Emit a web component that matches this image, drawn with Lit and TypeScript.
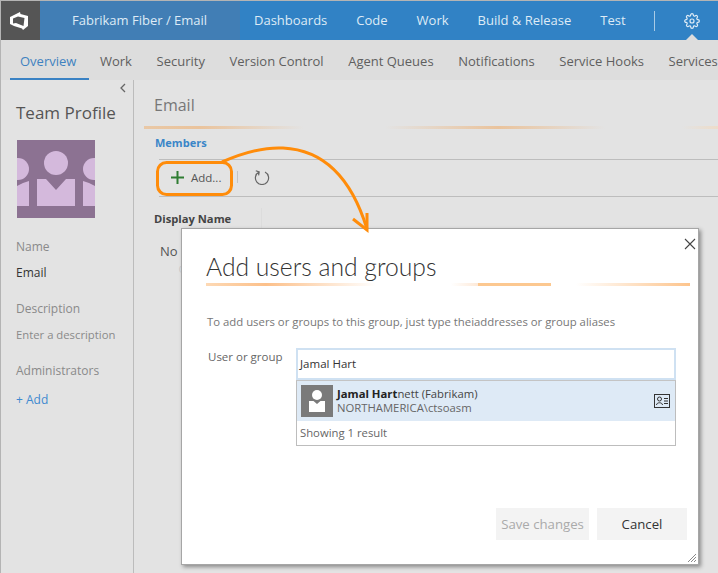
import { LitElement, html, css, svg } from 'lit';
import { customElement } from 'lit/decorators.js';

const HUBS = ['Dashboards', 'Code', 'Work', 'Build & Release', 'Test'];
const TABS = ['Overview', 'Work', 'Security', 'Version Control', 'Agent Queues', 'Notifications', 'Service Hooks', 'Services'];

const gear = svg`<circle cx="12" cy="12" r="3"></circle><path d="M19.4 15a1.65 1.65 0 0 0 .33 1.82l.06.06a2 2 0 0 1 0 2.83 2 2 0 0 1-2.83 0l-.06-.06a1.65 1.65 0 0 0-1.82-.33 1.65 1.65 0 0 0-1 1.51V21a2 2 0 0 1-2 2 2 2 0 0 1-2-2v-.09A1.65 1.65 0 0 0 9 19.4a1.65 1.65 0 0 0-1.82.33l-.06.06a2 2 0 0 1-2.83 0 2 2 0 0 1 0-2.83l.06-.06a1.65 1.65 0 0 0 .33-1.82 1.65 1.65 0 0 0-1.51-1H3a2 2 0 0 1-2-2 2 2 0 0 1 2-2h.09A1.65 1.65 0 0 0 4.6 9a1.65 1.65 0 0 0-.33-1.82l-.06-.06a2 2 0 0 1 0-2.83 2 2 0 0 1 2.83 0l.06.06a1.65 1.65 0 0 0 1.82.33H9a1.65 1.65 0 0 0 1-1.51V3a2 2 0 0 1 2-2 2 2 0 0 1 2 2v.09a1.65 1.65 0 0 0 1 1.51 1.65 1.65 0 0 0 1.82-.33l.06-.06a2 2 0 0 1 2.83 0 2 2 0 0 1 0 2.83l-.06.06a1.65 1.65 0 0 0-.33 1.82V9a1.65 1.65 0 0 0 1.51 1H21a2 2 0 0 1 2 2 2 2 0 0 1-2 2h-.09a1.65 1.65 0 0 0-1.51 1z"></path>`;

@customElement('app-root')
export class AppRoot extends LitElement {
  static styles = css`
    :host {
      display: block;
      position: relative;
      width: 718px;
      height: 573px;
      box-sizing: border-box;
      overflow: hidden;
      border-top: 1px solid #b4b4b4;
      border-left: 1px solid #b4b4b4;
      background: #e3e3e3;
      font-family: 'Open Sans', 'Noto Sans', sans-serif;
      font-size: 12px;
      color: #555;
    }
    * { box-sizing: border-box; }

    .top { display: flex; height: 39px; background: #3182c5; color: #deebf6; font-size: 13px; align-items: center; }
    .logo { width: 39px; height: 39px; background: #555; display: flex; align-items: center; padding-left: 8px; }
    .project { width: 200px; height: 39px; background: #417eb5; padding: 0 0 2px 32px; display: flex; align-items: center; }
    .hubs { display: flex; gap: 29px; margin-left: 14px; width: 400px; padding-bottom: 2px; }
    .rule { width: 1px; height: 20px; background: #a9cbe6; }
    .cog { position: relative; height: 39px; margin-left: 29px; display: flex; align-items: center; }
    .cog::after {
      content: '';
      position: absolute;
      left: 2px;
      bottom: 0;
      border: 6px solid transparent;
      border-top: 0;
      border-bottom-color: #dddddd;
    }

    .tabs { display: flex; height: 40px; background: #dddddd; padding-left: 9px; font-size: 13px; white-space: nowrap; overflow: hidden; }
    .tab { padding: 3px 12.3px 0; display: flex; align-items: center; border-bottom: 2px solid transparent; color: #5f5f5f; }
    .tab.on { padding: 3px 13px 0 10px; margin-right: -1.7px; color: #3f82c0; border-bottom-color: #3a82c4; }

    .body { display: flex; height: 493px; }
    .side { position: relative; width: 133px; border-right: 1px solid #bcbcbc; padding: 20px 0 0 15px; color: #8a8a8a; }
    .chev { position: absolute; left: 118px; top: 3px; }
    .side h1 { margin: 0; font-size: 17px; line-height: 26px; font-weight: 400; color: #555; }
    .pic { display: block; margin: 14px 0 20px 1px; }
    .side p { margin: 0; line-height: 18px; }
    .name { margin-bottom: 8px !important; }
    .val { margin-bottom: 18px !important; color: #333; }
    .val.dim { color: #8a8a8a; font-size: 11.3px; }
    .side a { display: block; margin-top: 11px; color: #3f8ad0; }

    .main { flex: 1; min-width: 0; padding-top: 12px; }
    .main h2 { margin: 0 0 0 20px; font-size: 16px; line-height: 26px; font-weight: 400; color: #777; }
    .bar { height: 3px; margin: 8px 0 0 10px; background: linear-gradient(90deg, #e9c8a6 0, #eac39c 55px, #e3e3e3 160px, #e3e3e3 241px, #eac39c 354px, #e3e3e3 461px, #e3e3e3 538px, #eddcc9 574px); }
    .members { margin: 5px 0 0 21px; line-height: 18px; font-weight: 700; font-size: 11px; color: #3a86c8; }
    .tools { display: flex; align-items: center; height: 38px; margin: 7px 0 0 25px; padding-bottom: 2px; border-top: 1px solid #bdbdbd; border-bottom: 1px solid #bdbdbd; }
    .add { display: flex; align-items: center; gap: 7px; margin-left: 12px; width: 66px; font-size: 11.5px; }
    .sep { width: 1px; height: 12px; background: #c4c4c4; }
    .turn { margin-left: 16px; }
    .head { display: flex; align-items: center; height: 24px; margin: 9px 0 0 20px; }
    .head b { width: 107px; color: #444; font-size: 11.2px; }
    .head i { width: 1px; height: 20px; background: #dcdcdc; }
    .none { margin: 12px 0 0 26px; font-size: 13px; line-height: 18px; }
    .ghost { margin: 3px 0 0 45px; font-size: 8px; line-height: 10px; color: #c4c4c4; }

    .dialog {
      position: absolute;
      left: 180px;
      top: 227px;
      width: 518px;
      height: 337px;
      background: #fff;
      border: 1px solid #a6a6a6;
      box-shadow: 2px 2px 4px #8a8a8a;
      padding: 23px 8px 0 24px;
      display: flex;
      flex-direction: column;
    }
    .close { position: absolute; right: 2px; top: 9px; }
    .dialog h3 { margin: 0; height: 31px; line-height: 30px; font-family: Lato, 'Open Sans', sans-serif; font-size: 24.7px; font-weight: 300; color: #333; white-space: nowrap; }
    .line { height: 3px; background: linear-gradient(90deg, #fdd9b5 0, #fcc08a 60px, #fff 170px, #fff 245px, #fde9d8 272px, #fcc890 272px, #fcc890 345px, #fff 345px, #fff 370px, #fdc48c 484px); }
    .hint { margin: 27px 0 0 1px; line-height: 18px; font-size: 11.35px; color: #777; white-space: nowrap; }
    .form { display: flex; margin-top: 17px; }
    .form label { width: 90px; padding: 0 0 0 2px; line-height: 18px; font-size: 11.5px; color: #666; }
    .pick { width: 380px; }
    .input { height: 32px; border: 2px solid #cfe1f2; padding-left: 2px; line-height: 27px; font-size: 11.5px; color: #333; }
    .drop { height: 66px; border: 1px solid #bdbdbd; border-top-color: #c4c4c4; }
    .row { display: flex; align-items: center; height: 40px; background: #deeaf6; padding: 0 5px 0 4px; }
    .who { flex: 1; margin-left: 4px; font-size: 11.3px; color: #444; }
    .who div { height: 14px; line-height: 14px; }
    .who b { color: #222; }
    .who div:last-child { color: #666; }
    .count { padding-left: 3px; line-height: 24px; font-size: 11.3px; color: #666; }
    .buttons { display: flex; justify-content: flex-end; gap: 8px; margin: 62px 3px 0 0; }
    .btn { height: 32px; background: #f3f3f3; display: flex; align-items: center; justify-content: center; font-size: 13.2px; color: #333; }
    .btn.off { width: 93px; color: #aaa; }
    .btn.cancel { width: 90px; }
    .grip { position: absolute; right: 1px; bottom: 1px; }
    .ink { position: absolute; left: -1px; top: -1px; pointer-events: none; }
  `;

  render() {
    return html`
      <div class="top">
        <div class="logo">
          <svg width="20" height="20" viewBox="0 0 20 20">
            <path fill="#fff" fill-rule="evenodd" d="M1 6 L11 1 L11.5 3 L19 5 L19 15 L14 19 L13 17.5 L5 15 L1 13 Z M4 7.5 L4 12.5 L7 12 L14.5 15 L15.500 7 L9 5.500 Z"></path>
          </svg>
        </div>
        <div class="project">Fabrikam Fiber / Email</div>
        <div class="hubs">${HUBS.map((h) => html`<span>${h}</span>`)}</div>
        <div class="rule"></div>
        <div class="cog">
          <svg width="16" height="16" viewBox="0 0 24 24" fill="none" stroke="#deebf6" stroke-width="1.8">${gear}</svg>
        </div>
      </div>
      <div class="tabs">
        ${TABS.map((t, i) => html`<div class="tab ${i === 0 ? 'on' : ''}">${t}</div>`)}
      </div>
      <div class="body">
        <div class="side">
          <svg class="chev" width="8" height="10" viewBox="0 0 8 10" fill="none" stroke="#666" stroke-width="1.3"><path d="M6 1 L2 5 L6 9"></path></svg>
          <h1>Team Profile</h1>
          <svg class="pic" width="78" height="78" viewBox="0 0 78 78">
            <rect width="78" height="78" fill="#8c7292"></rect>
            <g fill="#d4b9dc">
              <circle cx="39" cy="23" r="12"></circle>
              <circle cx="1" cy="29" r="11"></circle>
              <circle cx="77" cy="29" r="11"></circle>
              <path d="M20 39 H29 L39 50 L49 39 H58 V66 H20 Z"></path>
              <path d="M0 46 L6 43 L12 41 V66 H0 Z"></path>
              <path d="M66 41 L72 43 L78 46 V66 H66 Z"></path>
            </g>
          </svg>
          <p class="name">Name</p>
          <p class="val">Email</p>
          <p class="name">Description</p>
          <p class="val dim">Enter a description</p>
          <p>Administrators</p>
          <a>+ Add</a>
        </div>
        <div class="main">
          <h2>Email</h2>
          <div class="bar"></div>
          <div class="members">Members</div>
          <div class="tools">
            <div class="add">
              <svg width="13" height="13" viewBox="0 0 13 13"><path fill="#2f7d32" d="M5.500 0 H7.500 V5.500 H13 V7.500 H7.500 V13 H5.500 V7.500 H0 V5.500 H5.500 Z"></path></svg>
              <span>Add...</span>
            </div>
            <div class="sep"></div>
            <svg class="turn" width="16" height="16" viewBox="0 0 16 16" fill="none" stroke="#666" stroke-width="1.2"><path d="M5 2.200 A6.600 6.600 0 1 0 11 2.200 M1.800 1 L5.200 2.200 L4.600 5.600" transform="translate(0 0.8)"></path></svg>
          </div>
          <div class="head"><b>Display Name</b><i></i></div>
          <div class="none">No</div>
          <div class="ghost">(</div>
        </div>
      </div>

      <div class="dialog">
        <svg class="close" width="12" height="12" viewBox="0 0 12 12" stroke="#444" stroke-width="1.1"><path d="M1 1 L11 11 M11 1 L1 11"></path></svg>
        <h3>Add users and groups</h3>
        <div class="line"></div>
        <div class="hint">To add users or groups to this group, just type theiaddresses or group aliases</div>
        <div class="form">
          <label>User or group</label>
          <div class="pick">
            <div class="input">Jamal Hart</div>
            <div class="drop">
              <div class="row">
                <svg width="32" height="32" viewBox="0 0 32 32">
                  <rect width="32" height="32" fill="#7a7a7a"></rect>
                  <circle cx="16" cy="10" r="5" fill="#fff"></circle>
                  <path fill="#fff" d="M8 16 H12.500 L16 19 L19.500 16 H24 V27 H8 Z"></path>
                </svg>
                <div class="who">
                  <div><b>Jamal Hart</b>nett (Fabrikam)</div>
                  <div>NORTHAMERICA\\ctsoasm</div>
                </div>
                <svg width="16" height="14" viewBox="0 0 16 14" fill="none" stroke="#333">
                  <rect x="0.500" y="0.500" width="15" height="13"></rect>
                  <circle cx="5.500" cy="5" r="2"></circle>
                  <path d="M2.500 11 C2.500 8 8.500 8 8.500 11 M10 4.500 H14 M10 7 H14 M10 9.500 H14"></path>
                </svg>
              </div>
              <div class="count">Showing 1 result</div>
            </div>
          </div>
        </div>
        <div class="buttons">
          <div class="btn off">Save changes</div>
          <div class="btn cancel">Cancel</div>
        </div>
        <svg class="grip" width="10" height="10" viewBox="0 0 10 10" stroke="#8a8a8a"><path d="M9 1 L1 9 M9 4 L4 9 M9 7 L7 9"></path></svg>
      </div>

      <svg class="ink" width="718" height="573" fill="none" stroke="#ff8c0a" stroke-width="3">
        <rect x="157.500" y="162.500" width="74" height="32" rx="9"></rect>
        <path d="M222 162 C245 152 265 147 283 148 C325 150 352 180 367 229"></path>
        <path d="M353 219 L367 230 L367 213"></path>
      </svg>
    `;
  }
}
